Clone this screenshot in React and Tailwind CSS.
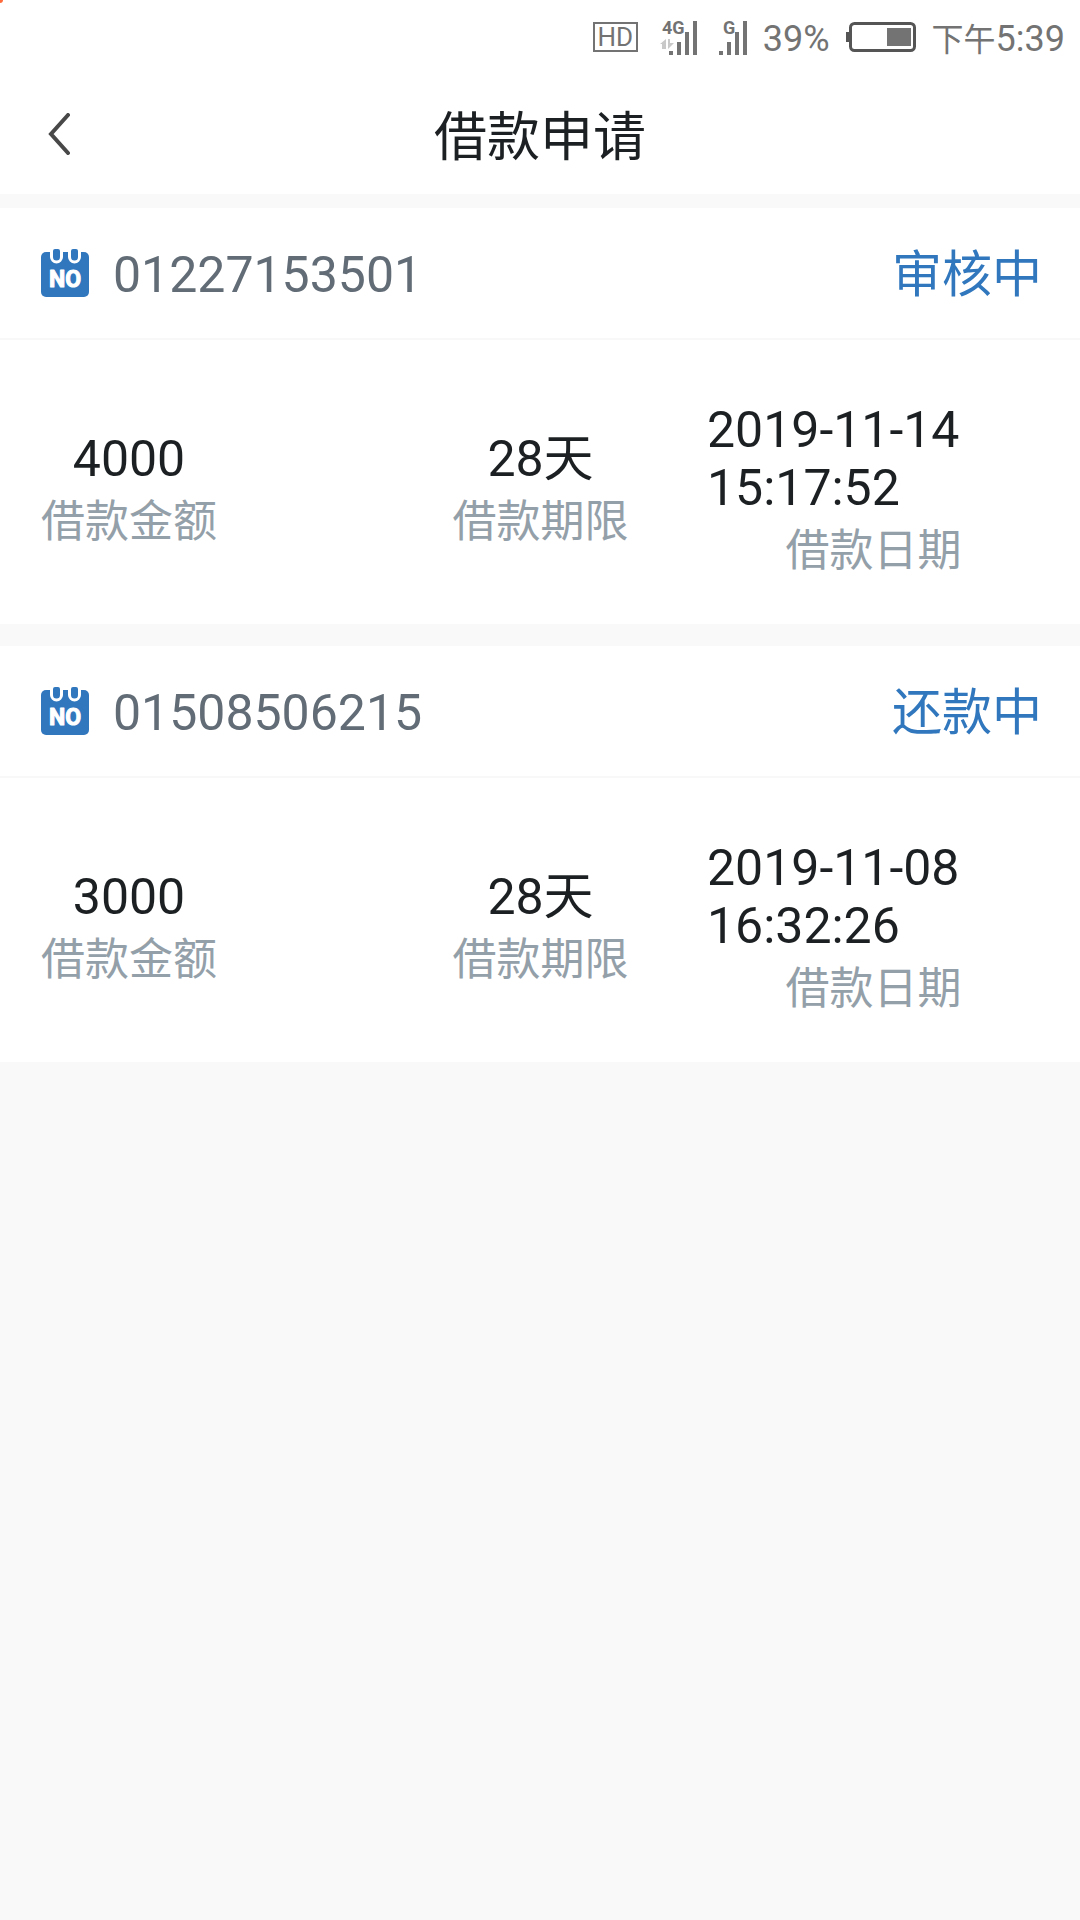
import React from 'react';

const loans = [
    { no: '01227153501', status: '审核中', amount: '4000', term: '28天', date: '2019-11-14 15:17:52' },
    { no: '01508506215', status: '还款中', amount: '3000', term: '28天', date: '2019-11-08 16:32:26' },
];

function MobileSignal() {
    return (
        <svg width="37" height="44" viewBox="0 -4 37 44" className="block shrink-0" aria-hidden="true">
            <text x="2" y="15" fontSize="18" fontWeight="700" fill="#737373" className="font-['Roboto']">4G</text>
            <path d="M0 25 L6 20 V30 H2 V25 Z M8 20 H10 V24 H14 L8 30 Z" fill="#c9c9c9" />
            <path d="M9 32h4v4h-4z M17 23h4v13h-4z M25 13h4v23h-4z M33 2h4v34h-4z" fill="#737373" />
        </svg>
    );
}

function GSignal() {
    return (
        <svg width="28" height="44" viewBox="0 -4 28 44" className="block shrink-0" aria-hidden="true">
            <text x="4" y="15" fontSize="18" fontWeight="700" fill="#737373" className="font-['Roboto']">G</text>
            <path d="M0 32h4v4H0z M8 23h4v13H8z M16 13h4v23h-4z M24 2h4v34h-4z" fill="#737373" />
        </svg>
    );
}

function Battery() {
    return (
        <svg width="70" height="30" viewBox="0 0 70 30" className="block shrink-0" aria-hidden="true">
            <rect x="0" y="10" width="4" height="10" fill="#555555" />
            <rect x="4.5" y="1.5" width="64" height="27" rx="4" fill="none" stroke="#555555" strokeWidth="3" />
            <rect x="41" y="6" width="24" height="18" fill="#737373" />
        </svg>
    );
}

function StatusBar() {
    return (
        <div className="flex h-[74px] items-center justify-end pr-[15px] text-4xl text-[#737373]">
            <div className="flex h-[30px] w-[45px] items-center justify-center border-2 border-[#737373] text-[26px] leading-none">
                HD
            </div>
            <div className="ml-[22px]">
                <MobileSignal />
            </div>
            <div className="ml-[22px]">
                <GSignal />
            </div>
            <span className="ml-4 pt-1">39%</span>
            <div className="ml-4">
                <Battery />
            </div>
            <span className="ml-4 flex items-baseline pt-1">
                <span className="text-[32px]">下午</span>5:39
            </span>
        </div>
    );
}

function NumberIcon() {
    return (
        <svg width="48" height="48" viewBox="0 0 48 48" className="shrink-0" aria-hidden="true">
            <rect x="0" y="3" width="48" height="45" rx="5" fill="#3077be" />
            <path d="M9 0 H22 V8 A6 6 0 0 1 9 8 Z M27 0 H40 V8 A6 6 0 0 1 27 8 Z" fill="#ffffff" />
            <path d="M12 2 Q12 0 14 0 H17 Q19 0 19 2 V8 A3.5 3.5 0 0 1 12 8 Z M30 2 Q30 0 32 0 H35 Q37 0 37 2 V8 A3.5 3.5 0 0 1 30 8 Z" fill="#3077be" />
            <text
                x="24"
                y="38"
                textAnchor="middle"
                fontSize="23"
                fontWeight="700"
                fill="#ffffff"
                stroke="#ffffff"
                strokeWidth="1"
                strokeLinejoin="round"
                className="font-['Roboto']"
            >
                NO
            </text>
        </svg>
    );
}

function Field({ label, value, className = '' }) {
    return (
        <div className={`flex flex-col items-center gap-2 ${className}`}>
            <dd className="order-1 text-[50px] leading-[58px] text-[#1c2022]">{value}</dd>
            <dt className="order-2 text-[44px] leading-[52px] text-[#94a0a9]">{label}</dt>
        </div>
    );
}

function LoanCard({ loan }) {
    return (
        <article className="bg-white">
            <header className="flex h-[132px] items-center border-b-2 border-[#f8f8f8] pr-[38px] pl-[41px] text-[50px]">
                <NumberIcon />
                <h2 className="ml-6 pt-1 text-[#626c76]">{loan.no}</h2>
                <span className="ml-auto pt-1 text-[#3077be]">{loan.status}</span>
            </header>
            <dl className="grid grid-cols-3 items-center pt-[61px] pr-10 pb-[47px] pl-[41px]">
                <Field label="借款金额" value={loan.amount} className="justify-self-start" />
                <Field label="借款期限" value={loan.term} />
                <Field label="借款日期" value={loan.date} />
            </dl>
        </article>
    );
}

export default function App() {
    return (
        <div className="relative min-h-screen bg-[#f9f9f9] font-['Roboto','Noto_Sans_CJK_SC',sans-serif]">
            <div className="absolute top-0 left-0 h-[3px] w-[3px] rounded-br-full bg-[#ff6a3c]" />
            <div className="bg-white">
                <StatusBar />
                <nav className="grid h-[120px] grid-cols-[1fr_auto_1fr] items-center px-10">
                    <button type="button" aria-label="返回" className="justify-self-start p-2">
                        <svg width="24" height="42" viewBox="0 0 24 42" fill="none" stroke="#484848" strokeWidth="4">
                            <path d="M20 2 L3 21 L20 40" strokeLinecap="round" />
                        </svg>
                    </button>
                    <h1 className="pt-2 text-[53px] leading-none text-[#1c2022]">借款申请</h1>
                </nav>
            </div>
            <main className="flex flex-col gap-[22px] pt-3.5">
                {loans.map((loan) => (
                    <LoanCard key={loan.no} loan={loan} />
                ))}
            </main>
        </div>
    );
}
